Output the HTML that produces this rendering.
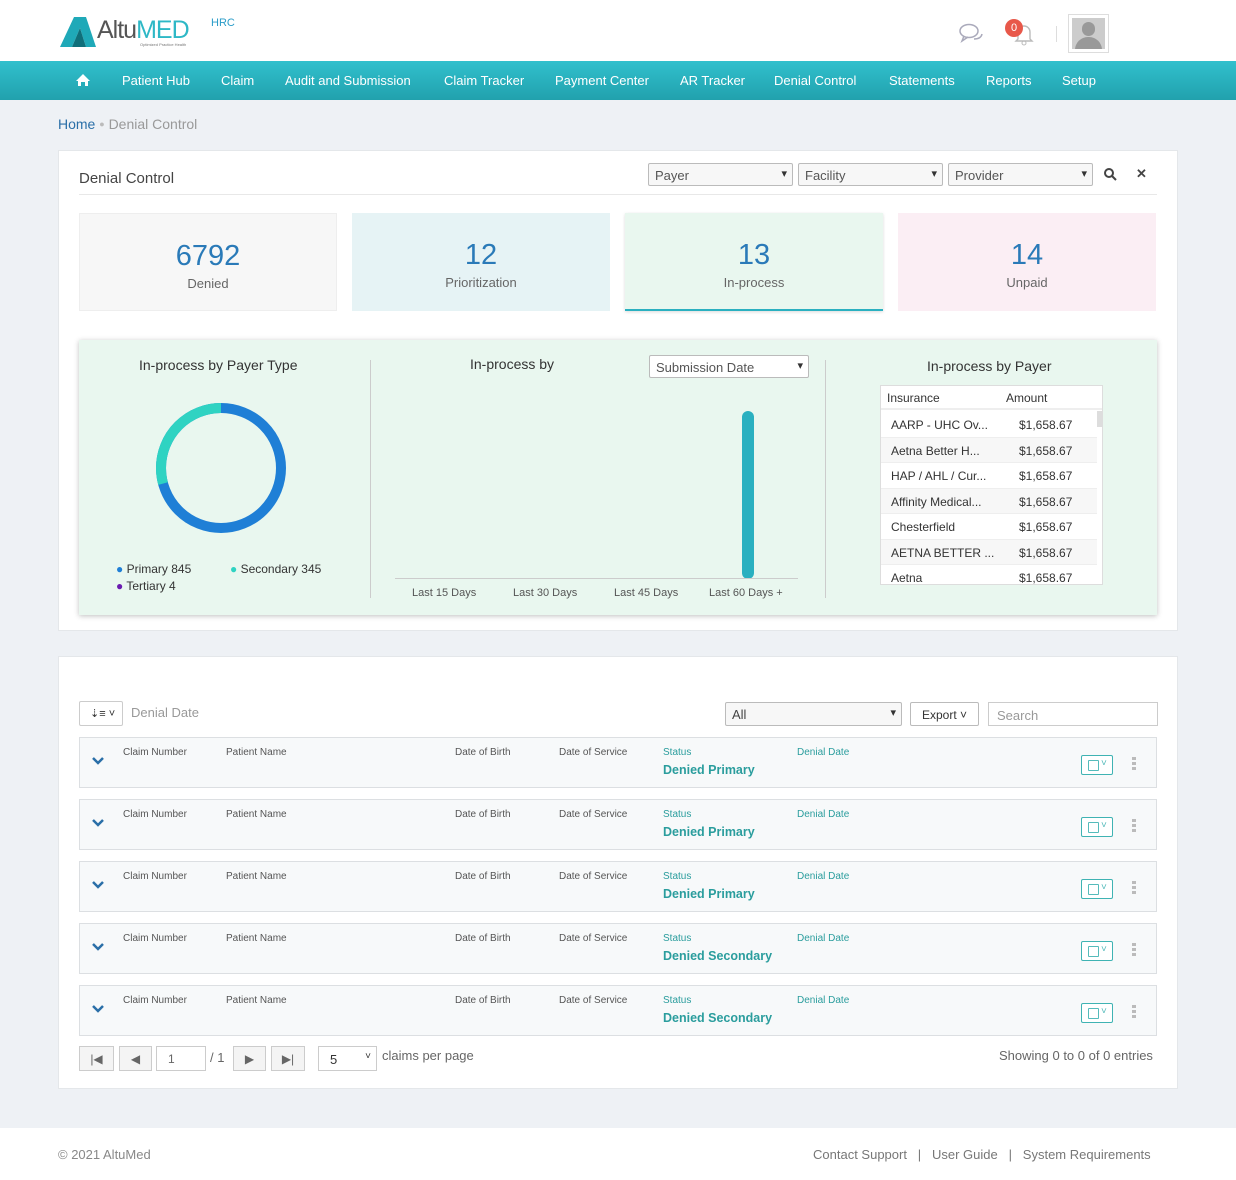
<!DOCTYPE html>
<html><head><meta charset="utf-8"><style>
*{box-sizing:border-box;margin:0;padding:0}
body{width:1236px;height:1180px;position:relative;background:#eef1f5;font-family:"Liberation Sans",sans-serif;color:#555;overflow:hidden}
.a{position:absolute}
.nav{left:0;top:61px;width:1236px;height:39px;background:linear-gradient(#31c0cd,#21a1ad);}
.nav span{position:absolute;top:12px;color:#fff;font-size:13px}
.sel{position:absolute;height:23px;border:1px solid #bbb;background:#f7f7f7;font-size:13px;color:#555;padding:4px 6px;border-radius:2px}
.sel:after{content:"▾";position:absolute;right:5px;top:3px;font-size:11px;color:#333}
.stat{position:absolute;top:213px;height:98px;width:258px;text-align:center}
.stat b{display:block;font-weight:normal;font-size:29px;color:#2a7ab8;margin-top:26px}
.stat i{display:block;font-style:normal;font-size:13px;color:#666;margin-top:3px}
.row{position:absolute;left:79px;width:1078px;height:51px;background:#f7f9fa;border:1px solid #dcdfe2}
.row .l{position:absolute;top:9px;font-size:10px;color:#555}
.row .t{position:absolute;top:9px;font-size:10px;color:#2a9d9d}
.row .v{position:absolute;top:25px;font-size:12.5px;color:#2a9d9d;font-weight:bold}
.row .chev{position:absolute;left:11px;top:18px}
.row .nb{position:absolute;left:1001px;top:17px;width:32px;height:20px;border:1px solid #3fb3b3;border-radius:2px;background:#fff}
.row .nb:before{content:"";position:absolute;left:6px;top:4px;width:9px;height:9px;border:1px solid #5bb;border-radius:1px}
.row .nb:after{content:"˅";position:absolute;left:19px;top:2px;font-size:10px;color:#5bb}
.row .dots{position:absolute;left:1052px;top:19px;width:4px;font-size:0}
.row .dots i{display:block;width:4px;height:3px;background:#bbb;margin-bottom:2px}
.tr{position:absolute;left:0;width:216px;height:25.5px;font-size:12px;color:#333;border-bottom:1px solid #eee}
.tr span{position:absolute;top:6px}
.pb{position:absolute;top:1046px;height:25px;border:1px solid #ccc;background:#f4f4f4;font-size:12px;color:#666;text-align:center;padding-top:5px}
</style></head><body>
<div class="a" style="left:0;top:0;width:1236px;height:61px;background:#fff"></div>
<svg class="a" style="left:58px;top:16px" width="40" height="32"><polygon points="2,31 16,1 28,1 38,31 28,31 22,12 14,31" fill="#1fa9b8"/><polygon points="14,31 22,12 28,31" fill="#0f6f7a"/></svg>
<div class="a" style="left:97px;top:16px;font-size:25px;color:#555;letter-spacing:-1px">Altu<span style="color:#2eb8c6">MED</span></div>
<div class="a" style="left:140px;top:42px;font-size:4px;color:#777">Optimized Practice Health</div>
<div class="a" style="left:211px;top:17px;font-size:11px;color:#2a9cc8">HRC</div>
<svg class="a" style="left:958px;top:22px" width="26" height="22"><ellipse cx="11" cy="9" rx="9" ry="6.5" fill="none" stroke="#aab" stroke-width="1.5"/><path d="M6 14 L4 19 L10 15" fill="none" stroke="#aab" stroke-width="1.5"/><path d="M16 17 Q23 17 24 12" fill="none" stroke="#aab" stroke-width="1.5"/></svg>
<svg class="a" style="left:1012px;top:22px" width="24" height="24"><path d="M6 17 V10 A6 6 0 0 1 18 10 V17 L20 19 H4 Z" fill="none" stroke="#bbb" stroke-width="1.4"/><circle cx="12" cy="21" r="2" fill="none" stroke="#bbb"/></svg>
<div class="a" style="left:1005px;top:19px;width:18px;height:18px;border-radius:9px;background:#e8584a;color:#fff;font-size:11px;text-align:center;line-height:18px">0</div>
<div class="a" style="left:1056px;top:26px;width:1px;height:16px;background:#ddd"></div>
<div class="a" style="left:1068px;top:14px;width:41px;height:39px;border:1px solid #ddd;background:#fff"><div class="a" style="left:3px;top:3px;width:33px;height:31px;background:#ccc;overflow:hidden"><div class="a" style="left:10px;top:4px;width:13px;height:14px;border-radius:7px;background:#999"></div><div class="a" style="left:3px;top:19px;width:27px;height:18px;border-radius:13px 13px 0 0;background:#999"></div></div></div>
<div class="a nav">
<svg class="a" style="left:75px;top:12px" width="16" height="14"><path d="M8 1 L15 8 H13 V13 H10 V9 H6 V13 H3 V8 H1 Z" fill="#fff"/></svg>
<span style="left:122px">Patient Hub</span><span style="left:221px">Claim</span><span style="left:285px">Audit and Submission</span><span style="left:444px">Claim Tracker</span><span style="left:555px">Payment Center</span><span style="left:680px">AR Tracker</span><span style="left:774px">Denial Control</span><span style="left:889px">Statements</span><span style="left:986px">Reports</span><span style="left:1062px">Setup</span>
</div>
<div class="a" style="left:58px;top:116px;font-size:14px;color:#2a6fa8">Home <span style="color:#bbb;font-size:9px;vertical-align:2px">●</span> <span style="color:#999">Denial Control</span></div>

<div class="a" style="left:58px;top:150px;width:1120px;height:481px;background:#fff;border:1px solid #e4e7ea"></div>
<div class="a" style="left:79px;top:170px;font-size:15px;color:#444">Denial Control</div>
<div class="a" style="left:79px;top:194px;width:1078px;height:1px;background:#e8e8e8"></div>
<div class="sel" style="left:648px;top:163px;width:145px">Payer</div>
<div class="sel" style="left:798px;top:163px;width:145px">Facility</div>
<div class="sel" style="left:948px;top:163px;width:145px">Provider</div>
<svg class="a" style="left:1104px;top:168px" width="13" height="13"><circle cx="5" cy="5" r="4" fill="none" stroke="#444" stroke-width="2"/><path d="M8 8 L12 12" stroke="#444" stroke-width="2"/></svg>
<div class="a" style="left:1136px;top:166px;font-size:13px;color:#444;font-weight:bold">✕</div>
<div class="stat" style="left:79px;background:#f7f7f7;border:1px solid #eee"><b>6792</b><i>Denied</i></div>
<div class="stat" style="left:352px;background:#e6f3f5"><b>12</b><i>Prioritization</i></div>
<div class="stat" style="left:625px;background:#e9f7ef;border-bottom:2px solid #2ab0c0;box-shadow:0 1px 3px rgba(0,0,0,.15)"><b>13</b><i>In-process</i></div>
<div class="stat" style="left:898px;background:#fbeef4"><b>14</b><i>Unpaid</i></div>

<div class="a" style="left:79px;top:340px;width:1078px;height:275px;background:#e9f7ef;box-shadow:0 1px 5px rgba(0,0,0,.25)"></div>
<div class="a" style="left:139px;top:357px;font-size:14px;color:#333">In-process by Payer Type</div>
<svg class="a" style="left:150px;top:398px" width="142" height="142"><circle cx="71" cy="70" r="60" fill="none" stroke="#1f7fd6" stroke-width="10"/><circle cx="71" cy="70" r="60" fill="none" stroke="#2fd3c2" stroke-width="10" stroke-dasharray="110 400" transform="rotate(-90 71 70) scale(1,-1) translate(0,-140)"/></svg>
<div class="a" style="left:116px;top:562px;font-size:12px;color:#333"><span style="color:#1f7fd6">●</span> Primary 845</div>
<div class="a" style="left:230px;top:562px;font-size:12px;color:#333"><span style="color:#2fd3c2">●</span> Secondary 345</div>
<div class="a" style="left:116px;top:579px;font-size:12px;color:#333"><span style="color:#6a1bb0">●</span> Tertiary 4</div>
<div class="a" style="left:370px;top:360px;width:1px;height:238px;background:#ccc"></div>
<div class="a" style="left:825px;top:360px;width:1px;height:238px;background:#ccc"></div>
<div class="a" style="left:470px;top:356px;font-size:14px;color:#333">In-process by</div>
<div class="sel" style="left:649px;top:355px;width:160px;background:#fff;color:#555">Submission Date</div>
<div class="a" style="left:742px;top:411px;width:12px;height:168px;border-radius:6px;background:#2ab0c0"></div>
<div class="a" style="left:395px;top:578px;width:403px;height:1px;background:#ccc"></div>
<div class="a" style="left:412px;top:587px;font-size:11px;color:#555">Last 15 Days</div>
<div class="a" style="left:513px;top:587px;font-size:11px;color:#555">Last 30 Days</div>
<div class="a" style="left:614px;top:587px;font-size:11px;color:#555">Last 45 Days</div>
<div class="a" style="left:709px;top:587px;font-size:11px;color:#555">Last 60 Days +</div>
<div class="a" style="left:927px;top:358px;font-size:14px;color:#333">In-process by Payer</div>
<div class="a" style="left:880px;top:385px;width:223px;height:200px;background:#fff;border:1px solid #ddd;overflow:hidden">
<div class="a" style="left:0;top:0;width:223px;height:24px;border-bottom:2px solid #eee;font-size:12px;color:#333"><span class="a" style="left:6px;top:5px">Insurance</span><span class="a" style="left:125px;top:5px">Amount</span></div>
<div class="a" style="left:216px;top:25px;width:6px;height:16px;background:#ddd"></div>
<div class="tr" style="top:26px;background:#fff"><span style="left:10px">AARP - UHC Ov...</span><span style="left:138px">$1,658.67</span></div>
<div class="tr" style="top:51.5px;background:#f7f7f7"><span style="left:10px">Aetna Better H...</span><span style="left:138px">$1,658.67</span></div>
<div class="tr" style="top:77px;background:#fff"><span style="left:10px">HAP / AHL / Cur...</span><span style="left:138px">$1,658.67</span></div>
<div class="tr" style="top:102.5px;background:#f7f7f7"><span style="left:10px">Affinity Medical...</span><span style="left:138px">$1,658.67</span></div>
<div class="tr" style="top:128px;background:#fff"><span style="left:10px">Chesterfield</span><span style="left:138px">$1,658.67</span></div>
<div class="tr" style="top:153.5px;background:#f7f7f7"><span style="left:10px">AETNA BETTER ...</span><span style="left:138px">$1,658.67</span></div>
<div class="tr" style="top:179px;background:#fff"><span style="left:10px">Aetna</span><span style="left:138px">$1,658.67</span></div>
</div>

<div class="a" style="left:58px;top:656px;width:1120px;height:433px;background:#fff;border:1px solid #e4e7ea"></div>
<div class="a" style="left:79px;top:701px;width:44px;height:25px;border:1px solid #ccc;border-radius:2px;font-size:11px;color:#333;padding:5px 0 0 10px">⇣≡ ˅</div>
<div class="a" style="left:131px;top:705px;font-size:13px;color:#999">Denial Date</div>
<div class="sel" style="left:725px;top:702px;width:177px;height:24px;color:#444">All</div>
<div class="a" style="left:910px;top:702px;width:69px;height:24px;border:1px solid #bbb;border-radius:2px;font-size:12px;color:#333;padding:5px 0 0 11px">Export ˅</div>
<div class="a" style="left:988px;top:702px;width:170px;height:24px;border:1px solid #ccc;font-size:13px;color:#999;padding:5px 0 0 8px">Search</div>

<div class="row" style="top:737px"><svg class="chev" width="14" height="10"><path d="M2 2 L7 7 L12 2" fill="none" stroke="#2a6fa8" stroke-width="2.5"/></svg><span class="l" style="left:43px">Claim Number</span><span class="l" style="left:146px">Patient Name</span><span class="l" style="left:375px">Date of Birth</span><span class="l" style="left:479px">Date of Service</span><span class="t" style="left:583px">Status</span><span class="v" style="left:583px">Denied Primary</span><span class="t" style="left:717px">Denial Date</span><div class="nb"></div><div class="dots"><i></i><i></i><i></i></div></div>
<div class="row" style="top:799px"><svg class="chev" width="14" height="10"><path d="M2 2 L7 7 L12 2" fill="none" stroke="#2a6fa8" stroke-width="2.5"/></svg><span class="l" style="left:43px">Claim Number</span><span class="l" style="left:146px">Patient Name</span><span class="l" style="left:375px">Date of Birth</span><span class="l" style="left:479px">Date of Service</span><span class="t" style="left:583px">Status</span><span class="v" style="left:583px">Denied Primary</span><span class="t" style="left:717px">Denial Date</span><div class="nb"></div><div class="dots"><i></i><i></i><i></i></div></div>
<div class="row" style="top:861px"><svg class="chev" width="14" height="10"><path d="M2 2 L7 7 L12 2" fill="none" stroke="#2a6fa8" stroke-width="2.5"/></svg><span class="l" style="left:43px">Claim Number</span><span class="l" style="left:146px">Patient Name</span><span class="l" style="left:375px">Date of Birth</span><span class="l" style="left:479px">Date of Service</span><span class="t" style="left:583px">Status</span><span class="v" style="left:583px">Denied Primary</span><span class="t" style="left:717px">Denial Date</span><div class="nb"></div><div class="dots"><i></i><i></i><i></i></div></div>
<div class="row" style="top:923px"><svg class="chev" width="14" height="10"><path d="M2 2 L7 7 L12 2" fill="none" stroke="#2a6fa8" stroke-width="2.5"/></svg><span class="l" style="left:43px">Claim Number</span><span class="l" style="left:146px">Patient Name</span><span class="l" style="left:375px">Date of Birth</span><span class="l" style="left:479px">Date of Service</span><span class="t" style="left:583px">Status</span><span class="v" style="left:583px">Denied Secondary</span><span class="t" style="left:717px">Denial Date</span><div class="nb"></div><div class="dots"><i></i><i></i><i></i></div></div>
<div class="row" style="top:985px"><svg class="chev" width="14" height="10"><path d="M2 2 L7 7 L12 2" fill="none" stroke="#2a6fa8" stroke-width="2.5"/></svg><span class="l" style="left:43px">Claim Number</span><span class="l" style="left:146px">Patient Name</span><span class="l" style="left:375px">Date of Birth</span><span class="l" style="left:479px">Date of Service</span><span class="t" style="left:583px">Status</span><span class="v" style="left:583px">Denied Secondary</span><span class="t" style="left:717px">Denial Date</span><div class="nb"></div><div class="dots"><i></i><i></i><i></i></div></div>

<div class="pb" style="left:79px;width:35px">|◀</div>
<div class="pb" style="left:119px;width:33px">◀</div>
<div class="pb" style="left:156px;width:50px;background:#fff;text-align:left;padding-left:11px">1</div>
<div class="a" style="left:210px;top:1050px;font-size:13px;color:#666">/ 1</div>
<div class="pb" style="left:233px;width:33px">▶</div>
<div class="pb" style="left:271px;width:34px">▶|</div>
<div class="pb" style="left:318px;width:59px;background:#fff;text-align:left;padding-left:11px;font-size:13px;color:#333">5 <span style="position:absolute;right:5px;top:4px;font-size:10px">˅</span></div>
<div class="a" style="left:382px;top:1048px;font-size:13px;color:#666">claims per page</div>
<div class="a" style="left:999px;top:1048px;font-size:13px;color:#666">Showing 0 to 0 of 0 entries</div>

<div class="a" style="left:0;top:1128px;width:1236px;height:52px;background:#fff"></div>
<div class="a" style="left:58px;top:1147px;font-size:13px;color:#888">© 2021 AltuMed</div>
<div class="a" style="left:813px;top:1147px;font-size:13px;color:#777">Contact Support &nbsp; | &nbsp; User Guide &nbsp; | &nbsp; System Requirements</div>
</body></html>
